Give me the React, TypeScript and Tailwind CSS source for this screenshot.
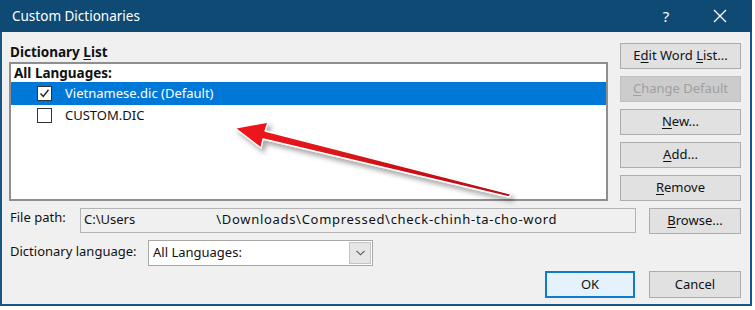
import React from 'react'

const font = { fontFamily: '"Noto Sans", "Open Sans", sans-serif' }

// Underlined access key letter
const U = ({ children }: { children: React.ReactNode }) => <span className="underline underline-offset-2">{children}</span>

const Btn = ({ children, className = '', disabled = false }: { children: React.ReactNode, className?: string, disabled?: boolean }) => (
    <div className={`h-[26px] flex items-center justify-center border text-[13px] ${disabled ? 'bg-[#cccccc] border-[#bfbfbf] text-[#a0a0a0]' : 'bg-[#e1e1e1] border-[#adadad] text-[#111]'} ${className}`}>
        <span>{children}</span>
    </div>
)

const CheckBox = ({ checked }: { checked?: boolean }) => (
    <div className="w-[15px] h-[15px] border border-[#333] bg-white flex items-center justify-center">
        {checked && (
            <svg width="11" height="11" viewBox="0 0 11 11">
                <path d="M1.5 5.5 L4.3 8.5 L9.5 1.8" fill="none" stroke="#222" strokeWidth="1.4" />
            </svg>
        )}
    </div>
)

const Arrow = () => (
    <svg className="absolute left-0 top-0 pointer-events-none" width="755" height="310" viewBox="0 0 755 310">
        <defs>
            <linearGradient id="arrowFill" x1="235" y1="128" x2="510" y2="195" gradientUnits="userSpaceOnUse">
                <stop offset="0" stopColor="#f0161c" />
                <stop offset="1" stopColor="#b80d12" />
            </linearGradient>
            <filter id="shadow" x="-10%" y="-30%" width="130%" height="180%">
                <feDropShadow dx="3" dy="4" stdDeviation="2.5" floodColor="#000" floodOpacity="0.35" />
            </filter>
        </defs>
        <polygon
            points="235,128 268,122 265,131 511,194 509,197 263,139 261,148"
            fill="url(#arrowFill)"
            stroke="#fff"
            strokeWidth="1.3"
            strokeLinejoin="round"
            filter="url(#shadow)"
        />
    </svg>
)

const App = () => {
    return (
        <div className="relative w-[755px] h-[310px] bg-white overflow-hidden" style={font}>

            <div className="w-[752px] h-[306px] flex flex-col bg-[#f0f0f0] border-x-2 border-b-2 border-[#1b5584]">

                {/* Title bar */}
                <div className="h-[32px] -mx-[2px] bg-[#0f4a74] flex items-center text-white">
                    <div className="pl-[12px] text-[13.5px] flex-1">Custom Dictionaries</div>
                    <div className="text-[15px] w-[56px] text-center">?</div>
                    <div className="w-[58px] flex justify-center pr-[6px]">
                        <svg width="14" height="14" viewBox="0 0 14 14">
                            <path d="M1 1 L13 13 M13 1 L1 13" stroke="#fff" strokeWidth="1.4" />
                        </svg>
                    </div>
                </div>

                <div className="pl-[7px] pr-[9px] pt-[11px] flex flex-col text-[13px] text-[#111]">

                    {/* List + buttons */}
                    <div className="flex gap-[12px]">
                        <div className="w-[599px] flex flex-col">
                            <div className="h-[20px] font-bold text-[13.5px] leading-[20px] pl-[1px] -mt-[1px]">Dictionary <U>L</U>ist</div>
                            <div className="h-[139px] border-2 border-[#8e8e8e] bg-white flex flex-col">
                                <div className="h-[18px] font-bold text-[13.5px] leading-[18px] pl-[3px]">All Languages:</div>
                                <div className="h-[23px] bg-[#0078d7] text-white flex items-center">
                                    <div className="ml-[26px]"><CheckBox checked /></div>
                                    <div className="ml-[13px]">Vietnamese.dic (Default)</div>
                                </div>
                                <div className="h-[21px] flex items-center">
                                    <div className="ml-[26px]"><CheckBox /></div>
                                    <div className="ml-[13px]">CUSTOM.DIC</div>
                                </div>
                            </div>
                        </div>

                        <div className="w-[121px] flex flex-col gap-[7px]">
                            <Btn>E<U>d</U>it Word <U>L</U>ist...</Btn>
                            <Btn disabled><U>C</U>hange Default</Btn>
                            <Btn><U>N</U>ew...</Btn>
                            <Btn><U>A</U>dd...</Btn>
                            <Btn><U>R</U>emove</Btn>
                        </div>
                    </div>

                    {/* File path */}
                    <div className="flex items-center mt-[5px]">
                        <div className="w-[71px] pl-[1px] -mt-[4px]">File path:</div>
                        <div className="w-[556px] h-[25px] border border-[#b4b4b4] bg-[#f0f0f0] flex items-center pl-[3px] whitespace-nowrap">
                            <span>C:\Users</span>
                            <span className="ml-[81px] tracking-[0.7px]">\Downloads\Compressed\check-chinh-ta-cho-word</span>
                        </div>
                        <Btn className="w-[92px] ml-[13px] mt-[2px]"><U>B</U>rowse...</Btn>
                    </div>

                    {/* Dictionary language */}
                    <div className="flex items-center mt-[6px]">
                        <div className="w-[139px] pl-[1px] -mt-[2px]">Dictionary language:</div>
                        <div className="w-[225px] h-[26px] border border-[#a8a8a8] bg-white flex items-center">
                            <div className="flex-1 pl-[4px]">All Languages:</div>
                            <div className="w-[22px] h-[22px] mr-[1px] bg-[#e6e6e6] border border-[#c4c4c4] flex items-center justify-center">
                                <svg width="9" height="6" viewBox="0 0 9 6">
                                    <path d="M0.5 0.8 L4.5 4.8 L8.5 0.8" fill="none" stroke="#555" strokeWidth="1.1" />
                                </svg>
                            </div>
                        </div>
                    </div>

                    {/* OK / Cancel */}
                    <div className="flex justify-end mt-[5px]">
                        <div className="w-[90px] h-[27px] border-2 border-[#0f7bd0] bg-[#e5f1fb] flex items-center justify-center">OK</div>
                        <Btn className="w-[92px] ml-[14px] h-[27px]">Cancel</Btn>
                    </div>
                </div>
            </div>

            <Arrow />
        </div>
    )
}

export default App
